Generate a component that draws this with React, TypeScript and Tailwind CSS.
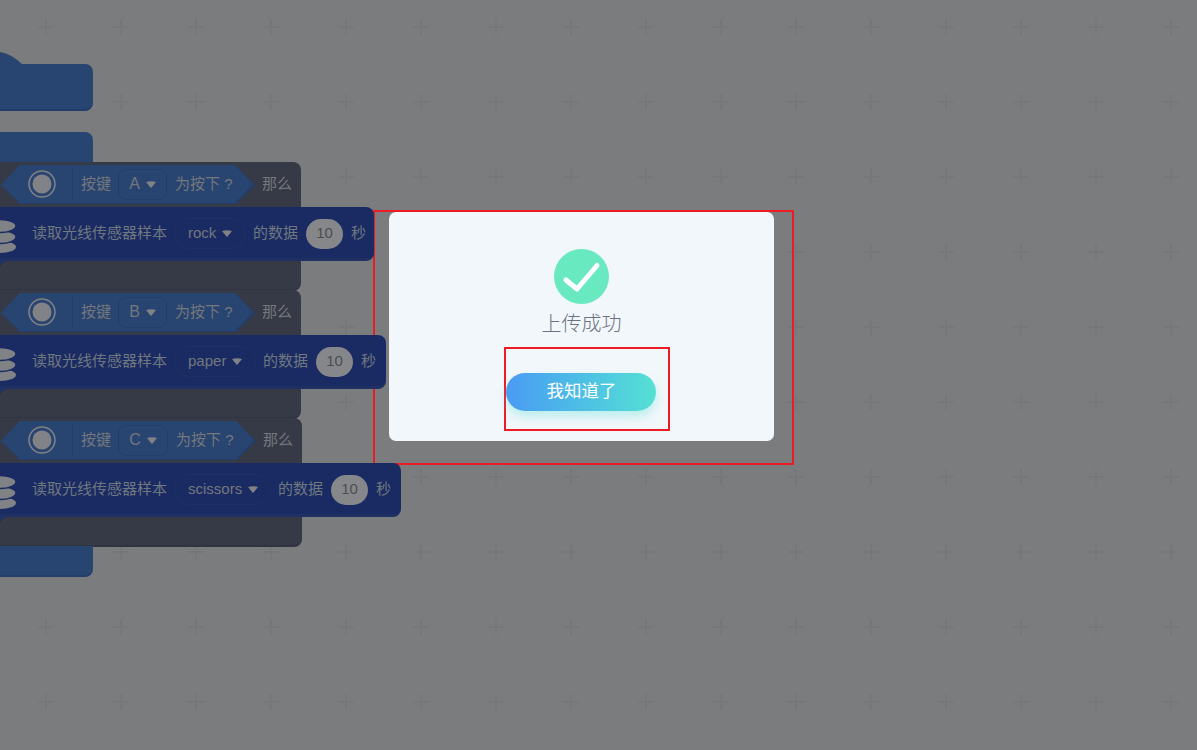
const font = "[font-family:'Liberation_Sans','Noto_Sans_CJK_SC',sans-serif]";

const Caret = () => (
  <svg width="10" height="7"><path d="M0 1 Q5 -0.500 10 1 L5.500 6.500 Q5 7 4.500 6.500Z" fill="#808285" /></svg>
);

function Cond({ letter, dropW, tail }: { letter: string; dropW: number; tail: number }) {
  const w = 254 + tail;
  return (
    <div className="relative ml-[1px] h-[40px] text-[15px] text-[#74777c]" style={{ width: w }}>
      <svg className="absolute left-0 top-0" width={w} height={40}>
        <polygon points={`0,20 19,0 ${w - 20},0 ${w},20 ${w - 19},39 19,39`} fill="#223d69" />
        <polygon points={`0,20 19,0 ${w - 20},0 ${w - 2},19 ${w - 20},38 19,38`} fill="#284571" />
        <circle cx="41" cy="19" r="13" fill="none" stroke="#808285" strokeWidth="1.500" />
        <circle cx="41" cy="19" r="9.500" fill="#808285" />
        <rect x="71" y="3" width="1" height="31" fill="#223d69" />
      </svg>
      <div className="relative flex h-[38px] items-center pl-[80px]">
        <span>按键</span>
        <span className="ml-[7px] flex h-[31px] items-center justify-center gap-[6px] rounded-[8px] border border-[#223d69]" style={{ width: dropW }}>
          <span className="text-[16px]">{letter}</span>
          <Caret />
        </span>
        <span className="ml-[8px] whitespace-nowrap">为按下 ?</span>
      </div>
    </div>
  );
}

function Sensor({ sample, width, dropW }: { sample: string; width: number; dropW: number }) {
  return (
    <div className="relative z-10 flex h-[54px] items-center rounded-r-[8px] border-b-[3px] border-[#1f3062] bg-[#1a2b64] pl-[32px] pt-[2px] text-[15px] text-[#70787f]" style={{ width }}>
      <svg className="absolute left-0 top-[12px]" width="18" height="36" viewBox="0 0 18 36">
        <ellipse cx="0" cy="28" rx="16" ry="6" fill="#808285" />
        <ellipse cx="0" cy="18" rx="16" ry="6.500" fill="#808285" stroke="#1a2b64" strokeWidth="1.500" />
        <ellipse cx="0" cy="7" rx="16" ry="6.500" fill="#808285" stroke="#1a2b64" strokeWidth="1.500" />
      </svg>
      <svg className="absolute left-0 top-[54px]" width="5" height="6"><path d="M0 0H5L0 5Z" fill="#1f3062" /></svg>
      <span className="whitespace-nowrap">读取光线传感器样本</span>
      <span className="ml-[7px] flex h-[31px] items-center gap-[6px] rounded-full border border-[#1f3062] pl-[13px] text-[#74777c]" style={{ width: dropW }}>
        {sample}
        <Caret />
      </span>
      <span className="ml-[7px] whitespace-nowrap">的数据</span>
      <span className="ml-[8px] flex h-[30px] w-[37px] items-center justify-center rounded-full bg-[#86878a] text-[#4c4d50]">10</span>
      <span className="ml-[8px]">秒</span>
    </div>
  );
}

function Group({ letter, sample, width, dropW, condDrop = 49, tail = 0, first = false }: { letter: string; sample: string; width: number; dropW: number; condDrop?: number; tail?: number; first?: boolean }) {
  return (
    <div className={first ? "" : "-mt-[1px]"}>
      <div className="h-[45px] rounded-tr-[8px] bg-[#363a47] pt-[3px]" style={{ width: 301 + tail }}>
        <div className="flex items-start text-[15px] text-[#74777c]">
          <Cond letter={letter} dropW={condDrop} tail={tail} />
          <span className="ml-[7px] pt-[8px] leading-[22px] whitespace-nowrap">那么</span>
        </div>
      </div>
      <Sensor sample={sample} width={width} dropW={dropW} />
      <div className="h-[30px] rounded-br-[8px] border-b-[2px] border-[#303441] bg-[#363a47]" style={{ width: 301 + tail }} />
    </div>
  );
}

export default function App() {
  return (
    <div className={`relative h-[750px] w-[1197px] overflow-hidden bg-[#7b7c7e] ${font}`}>
      <svg className="absolute inset-0" width="1197" height="750">
        <defs>
          <pattern id="plus" x="9" y="-11" width="75" height="75" patternUnits="userSpaceOnUse">
            <path d="M37 30v16M29 38h16" stroke="#76777a" strokeWidth="2" fill="none" />
          </pattern>
        </defs>
        <rect width="1197" height="750" fill="url(#plus)" />
      </svg>

      <div className="relative flex w-[410px] flex-col pt-[52px]">
        <div className="relative">
          <svg className="absolute left-0 top-0" width="26" height="14"><path d="M0 0 Q12 2 23 13 L0 13Z" fill="#284571" /></svg>
          <div className="mt-[12px] h-[47px] w-[93px] rounded-r-[8px] border-b-[2px] border-[#223d69] bg-[#284571]" />
        </div>
        <div className="mt-[21px] h-[31px] w-[93px] rounded-tr-[8px] bg-[#284571]" />
        <div className="-mt-[1px]">
          <Group first letter="A" sample="rock" width={374} dropW={72} />
          <Group letter="B" sample="paper" width={386} dropW={82} />
          <Group letter="C" sample="scissors" width={401} dropW={97} condDrop={50} tail={1} />
        </div>
        <div className="-mt-[1px] h-[31px] w-[93px] rounded-br-[8px] border-b-[2px] border-[#223d69] bg-[#284571]" />
      </div>

      <div className="absolute left-[373px] top-[210px] h-[255px] w-[421px] border-2 border-[#ed1c24]">
        <div className="ml-[14px] flex h-[229px] w-[385px] flex-col items-center rounded-[7px] bg-[#f2f7fb] pt-[37px]">
          <div className="flex h-[55px] w-[55px] items-center justify-center rounded-full bg-[#69e9bf]">
            <svg width="55" height="55" viewBox="0 0 55 55">
              <path d="M12 31 L23 40 L43 16.500" fill="none" stroke="#ffffff" strokeWidth="5" strokeLinecap="round" strokeLinejoin="round" />
            </svg>
          </div>
          <div className="mt-[7px] text-[20px] font-light leading-[27px] text-[#6b7280]">上传成功</div>
          <div className="ml-[10px] mt-[9px] flex h-[84px] w-[166px] items-start border-2 border-[#ed1c24] pt-[24px]">
            <button className="flex h-[38px] w-[150px] items-center justify-center rounded-full bg-gradient-to-r from-[#4a9bf2] to-[#55e0d4] pb-[2px] pl-[2px] text-[17.5px] text-white shadow-[0_6px_10px_rgba(85,224,212,0.35)]">
              我知道了
            </button>
          </div>
        </div>
      </div>
    </div>
  );
}
